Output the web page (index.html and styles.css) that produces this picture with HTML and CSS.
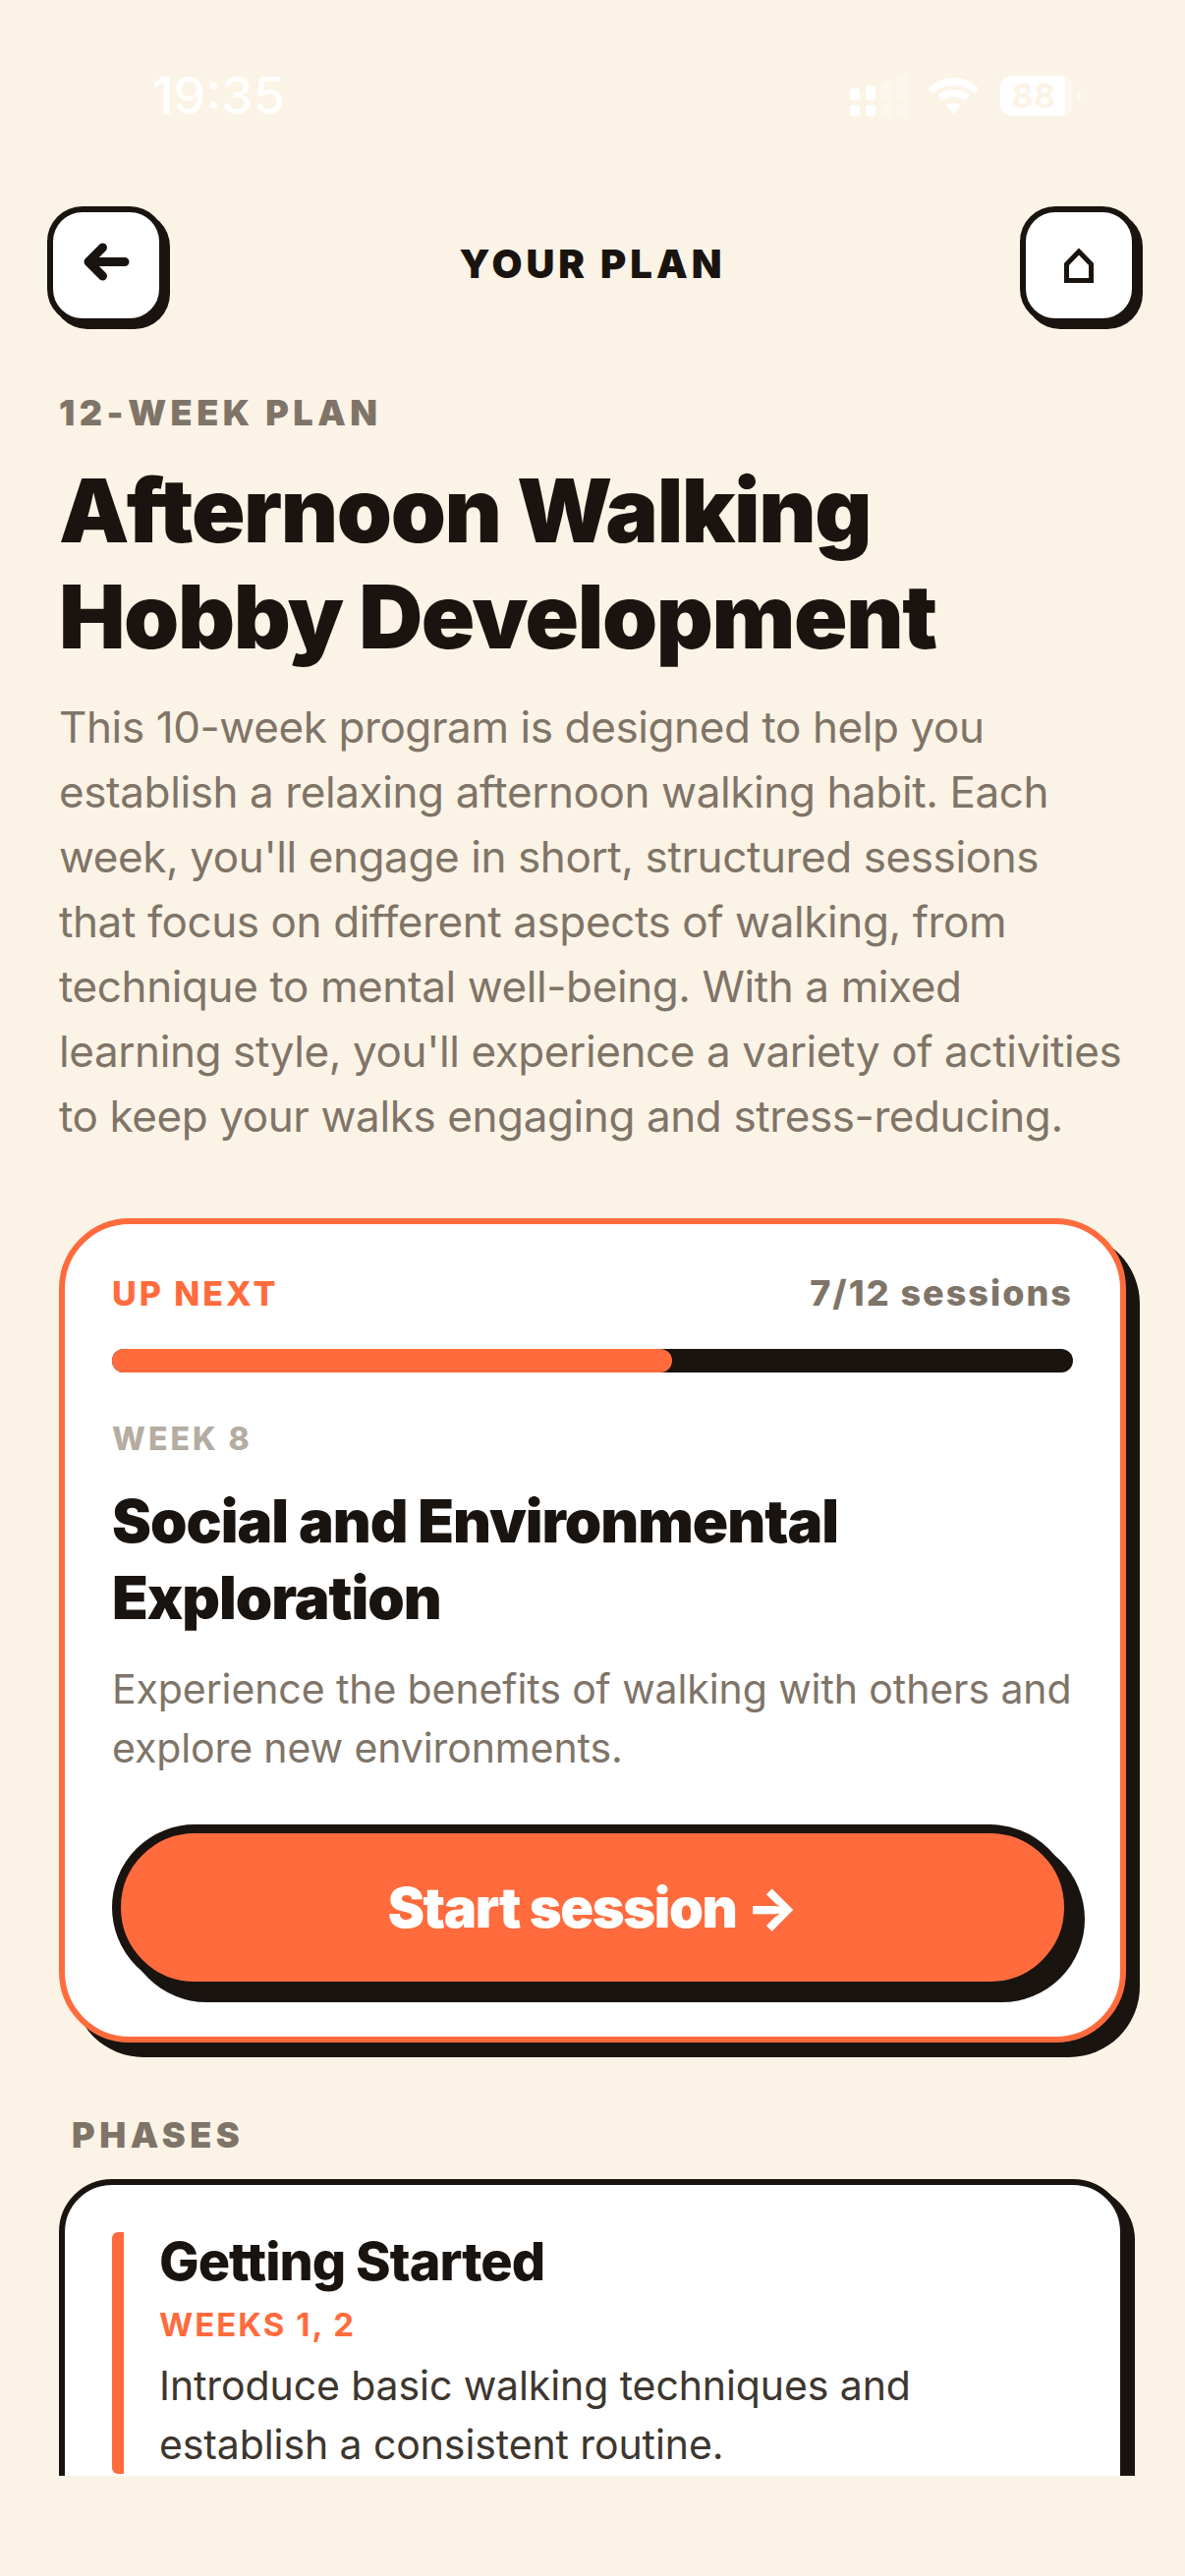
FILE: index.html
```html
<!DOCTYPE html>
<html lang="en">
<head>
  <meta charset="UTF-8" />
  <title>Your Plan</title>
  <link rel="stylesheet" href="styles.css">
</head>
<body>
  <div class="status-bar">
    <span class="clock">19:35</span>
    <div class="status-icons">
      <svg width="58" height="41" viewBox="0 0 58 41" fill="#fff">
        <rect x="0" y="13" width="10" height="12" rx="3"/><rect x="0" y="30" width="10" height="11" rx="3"/>
        <rect x="16" y="10" width="10" height="15" rx="3"/><rect x="16" y="30" width="10" height="11" rx="3"/>
        <g opacity="0.35">
          <rect x="32" y="6" width="10" height="19" rx="3"/><rect x="32" y="30" width="10" height="11" rx="3"/>
          <rect x="48" y="0" width="10" height="25" rx="3"/><rect x="48" y="30" width="10" height="11" rx="3"/>
        </g>
      </svg>
      <svg width="51" height="37" viewBox="0 0 51 37" fill="#fff">
        <path d="M25.500 0C35 0 44 4 51 11L47 16.500C41 11 34 8 25.500 8C17 8 10 11 4 16.500L0 11C7 4 16 0 25.500 0Z"/>
        <path d="M25.500 12C32 12 37 14 41.500 18L37.500 23.500C34 21 30 19.500 25.500 19.500C21 19.500 17 21 13.500 23.500L9.500 18C14 14 19 12 25.500 12Z"/>
        <path d="M25.500 26C28.500 26 31 27 33 28.500L25.500 37L18 28.500C20 27 22.500 26 25.500 26Z"/>
      </svg>
      <div class="battery"><span>88</span></div>
    </div>
  </div>

  <header class="top-bar">
    <button class="icon-btn">
      <svg class="back-icon" width="47" height="39" viewBox="0 0 47 39" fill="none" stroke="#1a1410" stroke-width="9" stroke-linecap="round" stroke-linejoin="round">
        <path d="M42 19.500H6M19.500 5L5 19.500L19.500 34"/>
      </svg>
    </button>
    <h1>YOUR PLAN</h1>
    <button class="icon-btn">
      <svg width="30" height="36" viewBox="0 0 30 36" fill="none" stroke="#1a1410" stroke-width="5">
        <path d="M2.500 33.500V17L15 4L27.500 17V33.500Z"/>
      </svg>
    </button>
  </header>

  <main class="scroll-area">
    <section class="intro">
      <div class="eyebrow">12-WEEK PLAN</div>
      <h2 class="plan-title">Afternoon Walking Hobby Development</h2>
      <p class="plan-desc">This 10-week program is designed to help you establish a relaxing afternoon walking habit. Each week, you'll engage in short, structured sessions<br>that focus on different aspects of walking, from technique to mental well-being. With a mixed learning style, you'll experience a variety of activities to keep your walks engaging and stress-reducing.</p>
    </section>

    <section class="next-card">
      <div class="next-head">
        <span class="next-label">UP NEXT</span>
        <span class="next-count">7/12 sessions</span>
      </div>
      <div class="progress"><div class="progress-fill" style="width: 58.33%"></div></div>
      <div class="week-label">WEEK 8</div>
      <h3 class="next-title">Social and Environmental Exploration</h3>
      <p class="next-desc">Experience the benefits of walking with others and explore new environments.</p>
      <button class="start-btn">Start session &#8594;</button>
    </section>

    <div class="phases-label">PHASES</div>
    <section class="phases-card">
      <div class="phase">
        <h4>Getting Started</h4>
        <div class="phase-weeks">WEEKS 1, 2</div>
        <p>Introduce basic walking techniques and establish a consistent routine.</p>
      </div>
    </section>
  </main>
</body>
</html>
```

FILE: styles.css
```css
* {
  box-sizing: border-box;
}
html, body {
  height: 2622px;
  overflow: hidden;
}
body {
  margin: 0;
  background: #fbf3e5;
  color: #1a1410;
  font-family: Inter, "Noto Sans", sans-serif;
}
.status-bar {
  height: 210px;
  padding: 0 114px 0 155px;
  display: flex;
  justify-content: space-between;
  align-items: flex-start;
}
.clock {
  margin-top: 72px;
  color: #fff;
  font-size: 52px;
  font-weight: 500;
  line-height: 52px;
}
.status-icons {
  margin-top: 77px;
  display: flex;
  gap: 22px;
  align-items: center;
}
.battery {
  position: relative;
  width: 74px;
  height: 41px;
  background: linear-gradient(to right, #fff 89%, rgba(255, 255, 255, 0.4) 89%);
  border-radius: 12px;
  display: flex;
  align-items: center;
  justify-content: center;
}
.battery::after {
  content: "";
  position: absolute;
  top: 15px;
  right: -8px;
  width: 4px;
  height: 11px;
  background: rgba(255, 255, 255, 0.5);
  border-radius: 0 3px 3px 0;
}
.battery span {
  margin-right: 6px;
  color: #fbf3e5;
  font-size: 34px;
  font-weight: 700;
}
.top-bar {
  height: 126px;
  padding: 0 48px;
  display: flex;
  justify-content: space-between;
  align-items: flex-start;
}
.top-bar h1 {
  margin: 0;
  font-size: 40px;
  font-weight: 900;
  letter-spacing: 4px;
  line-height: 118px;
}
.icon-btn {
  width: 120px;
  height: 120px;
  padding: 0;
  background: #fff;
  border: 6px solid #1a1410;
  border-radius: 36px;
  box-shadow: 5px 5px 0 #1a1410;
  display: flex;
  align-items: center;
  justify-content: center;
}
.back-icon {
  margin-bottom: 7px;
}
.scroll-area {
  height: 2184px;
  padding: 0 60px;
  overflow: hidden;
}
.eyebrow {
  margin-top: 64px;
  color: #7f7468;
  font-size: 36px;
  font-weight: 900;
  letter-spacing: 4.500px;
  line-height: 40px;
}
.plan-title {
  margin: 26px 0 0;
  font-size: 90px;
  font-weight: 900;
  letter-spacing: -1.400px;
  line-height: 108px;
}
.plan-desc {
  margin: 25px -3px 0 0;
  color: #7f7468;
  font-size: 44px;
  letter-spacing: -0.400px;
  line-height: 66px;
}
.next-card {
  height: 839px;
  margin-top: 71px;
  padding: 48px 48px 0;
  background: #fff;
  border: 6px solid #ff6b3d;
  border-radius: 72px;
  box-shadow: 14px 15px 0 #1a1410;
}
.next-head {
  height: 44px;
  display: flex;
  justify-content: space-between;
  align-items: center;
}
.next-label {
  color: #ff6b3d;
  font-size: 34px;
  font-weight: 800;
  letter-spacing: 3px;
}
.next-count {
  color: #7f7468;
  font-size: 36px;
  font-weight: 800;
  letter-spacing: 2px;
}
.progress {
  height: 24px;
  margin-top: 35px;
  background: #1a1410;
  border-radius: 12px;
}
.progress-fill {
  height: 100%;
  background: #ff6b3d;
  border-radius: 12px;
}
.week-label {
  margin-top: 48px;
  color: #b5aca2;
  font-size: 32px;
  font-weight: 800;
  letter-spacing: 3px;
  line-height: 40px;
}
.next-title {
  margin: 24px 0 0;
  font-size: 60px;
  font-weight: 900;
  letter-spacing: -1px;
  line-height: 78px;
}
.next-desc {
  margin: 24px 0 0;
  color: #7f7468;
  font-size: 41px;
  letter-spacing: -0.100px;
  line-height: 60px;
}
.start-btn {
  width: 100%;
  height: 169px;
  margin-top: 48px;
  background: #ff6b3d;
  border: 9px solid #1a1410;
  border-radius: 85px;
  box-shadow: 12px 12px 0 #1a1410;
  color: #fff;
  font-family: Inter, sans-serif;
  font-size: 56px;
  font-weight: 900;
  letter-spacing: -1.400px;
}
.phases-label {
  margin: 74px 0 0 13px;
  color: #7f7468;
  font-size: 36px;
  font-weight: 900;
  letter-spacing: 4.500px;
  line-height: 40px;
}
.phases-card {
  min-height: 400px;
  margin-top: 25px;
  padding: 48px;
  background: #fff;
  border: 6px solid #1a1410;
  border-radius: 54px;
  box-shadow: 9px 8px 0 #1a1410;
}
.phase {
  padding-left: 36px;
  border-left: 12px solid #ff6b3d;
  border-radius: 6px;
}
.phase h4 {
  margin: 0;
  font-size: 54px;
  font-weight: 800;
  letter-spacing: -1px;
  line-height: 60px;
}
.phase-weeks {
  margin-top: 14px;
  color: #ff6b3d;
  font-size: 33px;
  font-weight: 700;
  letter-spacing: 2px;
  line-height: 40px;
}
.phase p {
  margin: 12px 0 0;
  color: #3d362f;
  font-size: 41px;
  letter-spacing: -0.100px;
  line-height: 60px;
}
```
